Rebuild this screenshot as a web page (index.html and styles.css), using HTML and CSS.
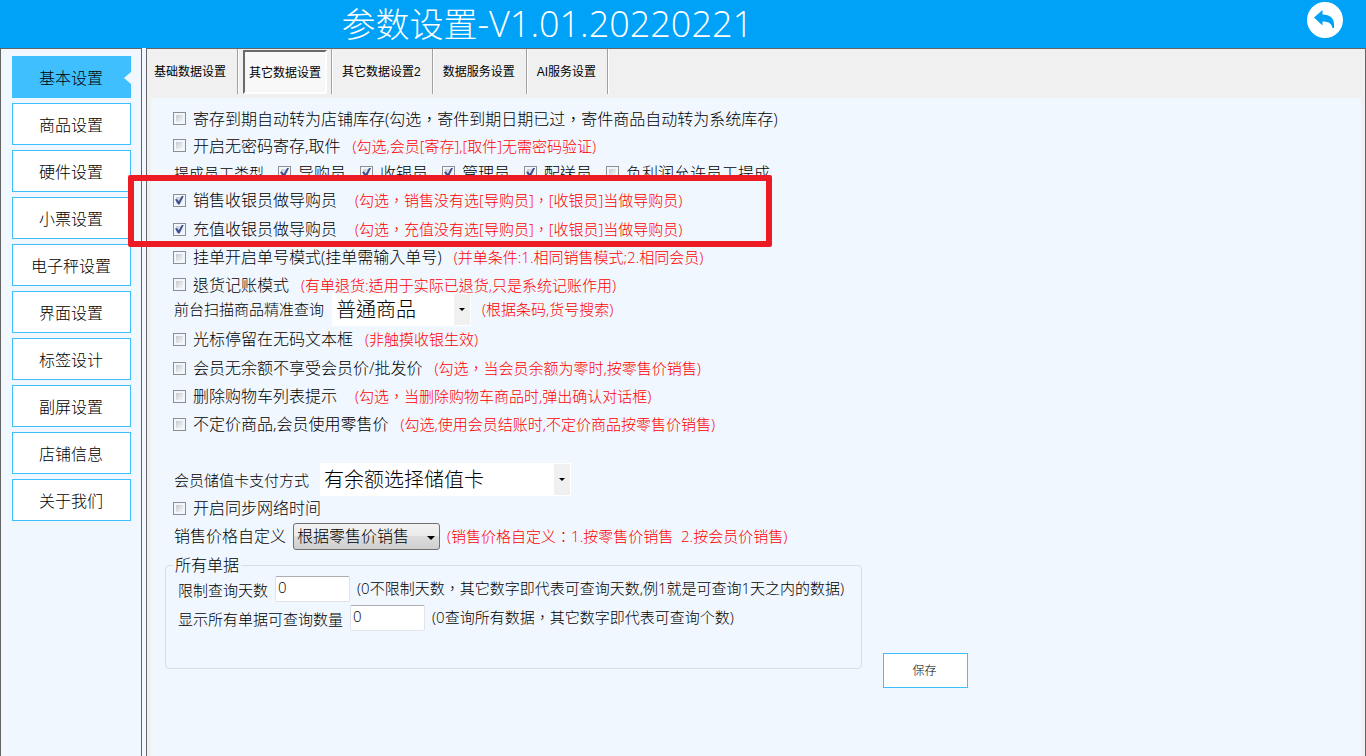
FILE: index.html
```html
<!DOCTYPE html>
<html lang="zh-TW">
<head>
    <meta charset="UTF-8">
    <meta name="viewport" content="width=device-width, initial-scale=1.0">
    <title>参数设置</title>
    <link rel="stylesheet" href="styles.css">
</head>
<body>
    <header class="topbar">
        <h1>参数设置<span class="version">-V1.01.20220221</span></h1>
        <button type="button" class="back-btn" aria-label="返回">
            <svg viewBox="0 0 36 36" width="36" height="36">
                <circle cx="18" cy="18" r="18" fill="#fff"/>
                <path d="M7 15.5 L15.5 8 V12.5 C23 12.5 27 16.5 27 22 V26 H25.5 C24.5 21.5 21.5 19.5 15.5 19.5 V23.5 Z" fill="#00a2f8"/>
            </svg>
        </button>
    </header>

    <div class="layout">
        <nav class="sidebar">
            <button type="button" class="active">基本设置</button>
            <button type="button">商品设置</button>
            <button type="button">硬件设置</button>
            <button type="button">小票设置</button>
            <button type="button">电子秤设置</button>
            <button type="button">界面设置</button>
            <button type="button">标签设计</button>
            <button type="button">副屏设置</button>
            <button type="button">店铺信息</button>
            <button type="button">关于我们</button>
        </nav>

        <main class="main">
            <div class="tabs" lang="zh-CN">
                <div class="tab"><button type="button">基础数据设置</button></div>
                <div class="tab selected"><button type="button">其它数据设置</button></div>
                <div class="tab"><button type="button">其它数据设置2</button></div>
                <div class="tab"><button type="button">数据服务设置</button></div>
                <div class="tab"><button type="button">AI服务设置</button></div>
            </div>

            <form class="panel">
                <div class="row tight">
                    <label class="check"><input type="checkbox">寄存到期自动转为店铺库存(勾选，寄件到期日期已过，寄件商品自动转为系统库存)</label>
                </div>
                <div class="row tight">
                    <label class="check"><input type="checkbox">开启无密码寄存,取件</label>
                    <span class="note">(勾选,会员[寄存],[取件]无需密码验证)</span>
                </div>
                <div class="row tight roles">
                    <span class="caption">提成员工类型</span>
                    <label class="check"><input type="checkbox" checked>导购员</label>
                    <label class="check"><input type="checkbox" checked>收银员</label>
                    <label class="check"><input type="checkbox" checked>管理员</label>
                    <label class="check"><input type="checkbox" checked>配送员</label>
                    <label class="check"><input type="checkbox">负利润允许员工提成</label>
                </div>

                <!-- 红框标注 -->
                <div class="marked">
                    <div class="row wide">
                        <label class="check"><input type="checkbox" checked>销售收银员做导购员</label>
                        <span class="note">(勾选，销售没有选[导购员]，[收银员]当做导购员)</span>
                    </div>
                    <div class="row wide">
                        <label class="check"><input type="checkbox" checked>充值收银员做导购员</label>
                        <span class="note">(勾选，充值没有选[导购员]，[收银员]当做导购员)</span>
                    </div>
                </div>

                <div class="row">
                    <label class="check"><input type="checkbox">挂单开启单号模式(挂单需输入单号)</label>
                    <span class="note">(并单条件:1.相同销售模式;2.相同会员)</span>
                </div>
                <div class="row tight">
                    <label class="check"><input type="checkbox">退货记账模式</label>
                    <span class="note">(有单退货:适用于实际已退货,只是系统记账作用)</span>
                </div>
                <div class="row search-row">
                    <label class="caption" for="searchType">前台扫描商品精准查询</label>
                    <span class="flat-select search-type">
                        <select id="searchType"><option>普通商品</option></select>
                    </span>
                    <span class="note">(根据条码,货号搜索)</span>
                </div>
                <div class="row loose">
                    <label class="check"><input type="checkbox">光标停留在无码文本框</label>
                    <span class="note">(非触摸收银生效)</span>
                </div>
                <div class="row">
                    <label class="check"><input type="checkbox">会员无余额不享受会员价/批发价</label>
                    <span class="note">(勾选，当会员余额为零时,按零售价销售)</span>
                </div>
                <div class="row wide">
                    <label class="check"><input type="checkbox">删除购物车列表提示</label>
                    <span class="note">(勾选，当删除购物车商品时,弹出确认对话框)</span>
                </div>
                <div class="row">
                    <label class="check"><input type="checkbox">不定价商品,会员使用零售价</label>
                    <span class="note">(勾选,使用会员结账时,不定价商品按零售价销售)</span>
                </div>

                <div class="row pay-row">
                    <label class="caption" for="payType">会员储值卡支付方式</label>
                    <span class="flat-select pay-type">
                        <select id="payType"><option>有余额选择储值卡</option></select>
                    </span>
                </div>
                <div class="row short">
                    <label class="check"><input type="checkbox">开启同步网络时间</label>
                </div>
                <div class="row price-row">
                    <label class="caption large" for="priceType">销售价格自定义</label>
                    <span class="price-type">
                        <select id="priceType"><option>根据零售价销售</option></select>
                    </span>
                    <span class="note">(销售价格自定义：1.按零售价销售&nbsp; 2.按会员价销售)</span>
                </div>

                <div class="bottom">
                    <fieldset>
                        <legend>所有单据</legend>
                        <div class="field">
                            <label for="days">限制查询天数</label>
                            <input type="text" id="days" value="0">
                            <span>(0不限制天数，其它数字即代表可查询天数,例1就是可查询1天之内的数据)</span>
                        </div>
                        <div class="field">
                            <label for="count">显示所有单据可查询数量</label>
                            <input type="text" id="count" value="0">
                            <span>(0查询所有数据，其它数字即代表可查询个数)</span>
                        </div>
                    </fieldset>
                    <button type="submit" class="save-btn">保存</button>
                </div>
            </form>
        </main>
    </div>
</body>
</html>
```
FILE: styles.css
```css
*, *::before, *::after {
    box-sizing: border-box;
}
body {
    margin: 0;
    min-height: 100vh;
    display: flex;
    flex-direction: column;
    background-color: #f0f7ff;
    color: #000;
    font-family: "Open Sans", "Noto Sans CJK TC", sans-serif;
    font-weight: 300;
    font-size: 16px;
}
button, select, input {
    font-family: inherit;
    font-weight: inherit;
    color: inherit;
    margin: 0;
}
.topbar {
    height: 48px;
    display: flex;
    align-items: center;
    justify-content: space-between;
    padding: 0 23px 8px 25%;
    background-color: #00a2f8;
}
h1 {
    margin: 0;
    padding-top: 8px;
    color: #fff;
    font-size: 34px;
    font-weight: 300;
    line-height: 40px;
    white-space: nowrap;
}
.version {
    font-size: 36px;
}
.back-btn {
    width: 36px;
    height: 36px;
    padding: 0;
    border: none;
    background: none;
}
.back-btn svg {
    display: block;
}
.layout {
    flex: 1;
    display: flex;
    gap: 4px;
}

/* 左侧菜单 */
.sidebar {
    width: 142px;
    padding: 7px 10px 7px 11px;
    display: flex;
    flex-direction: column;
    gap: 5px;
    border: 1px solid #646464;
    border-bottom: none;
}
.sidebar button {
    position: relative;
    height: 42px;
    padding: 0 1px 1px 0;
    border: 1px solid #40bfff;
    background-color: #fff;
    font-size: 16px;
}
.sidebar .active {
    background-color: #40bfff;
}
.sidebar .active::after {
    content: "";
    position: absolute;
    right: -1px;
    top: 15px;
    border: 6px solid transparent;
    border-left: none;
    border-right: 7px solid #f0f7ff;
}

/* 右侧区域 */
.main {
    flex: 1;
    display: flex;
    flex-direction: column;
    padding: 0 4px;
    border: 1px solid #646464;
    border-bottom: none;
    background-color: #f0f0f0;
}
.tabs {
    display: flex;
    height: 49px;
    margin-left: -4px;
    padding-bottom: 4px;
}
.tab {
    border-right: 1px solid #a0a0a0;
    box-shadow: 1px 0 0 #fff;
}
.tab button {
    height: 45px;
    padding: 0 11px 2px 10px;
    border: none;
    background: none;
    font-family: "Liberation Sans", "Noto Sans CJK SC", sans-serif;
    font-size: 12px;
    font-weight: 400;
}
.tab:first-child button {
    padding: 0 11px 2px 7px;
}
.tab.selected {
    padding: 1px 4px 0 5px;
}
.tab.selected button {
    height: 44px;
    padding: 0 4px 1px;
    border: 2px solid #fff;
    border-top-color: #696969;
    border-left-color: #696969;
    background-color: #f8f8f8;
}
.panel {
    flex: 1;
    padding: 7px 14px 20px;
    background-color: #f0f7ff;
}

/* 设置行 */
.row {
    display: flex;
    align-items: center;
    gap: 12px;
    height: 28px;
    padding-left: 8px;
    line-height: 24px;
    white-space: nowrap;
}
.row.tight {
    height: 27px;
}
.row.loose {
    height: 30px;
}
.row.short {
    height: 24px;
}
.row.wide {
    gap: 18px;
}
.row.roles {
    gap: 14px;
}
.check {
    display: flex;
    align-items: center;
    gap: 7px;
}
.check input {
    appearance: none;
    width: 13px;
    height: 13px;
    border: 1px solid #8e8f8f;
    background: linear-gradient(135deg, #c6cace, #f8f8f8) content-box #f4f4f4;
    padding: 2px;
}
.check input:checked::before {
    content: "";
    display: block;
    width: 9px;
    height: 9px;
    margin: -1px;
    background-color: #3a5091;
    clip-path: polygon(0 45%, 22% 38%, 42% 65%, 78% 0, 100% 0, 50% 100%, 35% 100%);
}
.caption {
    padding-left: 1px;
    font-size: 15px;
}
.caption.large {
    font-size: 16px;
}
.note {
    color: #f00;
    font-size: 15px;
}
.marked {
    position: relative;
    display: grid;
    gap: 1px;
}
.marked::after {
    content: "";
    position: absolute;
    left: -37px;
    top: -11px;
    width: 644px;
    height: 72px;
    border: 6px solid #ed1c24;
    border-radius: 2px;
    pointer-events: none;
}

/* 下拉框 */
.flat-select, .price-type {
    position: relative;
    display: flex;
}
.flat-select select {
    appearance: none;
    width: 100%;
    height: 33px;
    padding: 0 20px 0 4px;
    border: none;
    border-radius: 0;
    background-color: #fff;
    font-size: 20px;
}
.flat-select::before {
    content: "";
    position: absolute;
    top: 1px;
    right: 1px;
    bottom: 1px;
    width: 16px;
    background-color: #f0f0f0;
}
.flat-select::after, .price-type::after {
    content: "";
    position: absolute;
    right: 6px;
    top: 15px;
    border: 3px solid transparent;
    border-top-color: #000;
    border-bottom: none;
}
.search-row {
    height: 22px;
    margin-bottom: 4px;
    gap: 8px;
}
.search-row .note {
    padding-left: 3px;
}
.search-type {
    width: 139px;
}
.pay-row {
    height: 33px;
    margin-top: 25px;
    gap: 11px;
}
.pay-type {
    width: 251px;
}
.price-row {
    height: 32px;
    gap: 7px;
}
.price-type {
    width: 147px;
}
.price-type select {
    appearance: none;
    width: 100%;
    height: 27px;
    padding: 0 18px 0 3px;
    border: 1px solid #707070;
    border-radius: 3px;
    background: linear-gradient(#f2f2f2, #ebebeb 50%, #ddd 50%, #cfcfcf);
    font-size: 16px;
}
.price-type::after {
    right: 5px;
    top: 13px;
    border-width: 4px 4px 0;
}

/* 所有单据 */
.bottom {
    display: flex;
    align-items: flex-end;
    gap: 21px;
}
fieldset {
    width: 697px;
    height: 115px;
    margin: 2px 0 19px;
    padding: 0 12px;
    border: 1px solid #d5dfe5;
    border-radius: 4px;
}
legend {
    padding: 0 2px;
    margin-left: -5px;
    line-height: 22px;
}
.field {
    display: flex;
    align-items: center;
    gap: 7px;
    height: 26px;
    margin-bottom: 3px;
    font-size: 15px;
    white-space: nowrap;
}
.field span {
    padding-bottom: 4px;
}
.field input {
    width: 75px;
    height: 26px;
    padding: 0 2px 4px;
    border: 1px solid #e2e3ea;
    border-top-color: #abadb3;
    border-radius: 2px;
    background-color: #fff;
    font-size: 15px;
}
.save-btn {
    width: 85px;
    height: 35px;
    padding: 0 2px 2px 0;
    border: 1px solid #40bfff;
    background-color: #fff;
    font-size: 12px;
}
```
